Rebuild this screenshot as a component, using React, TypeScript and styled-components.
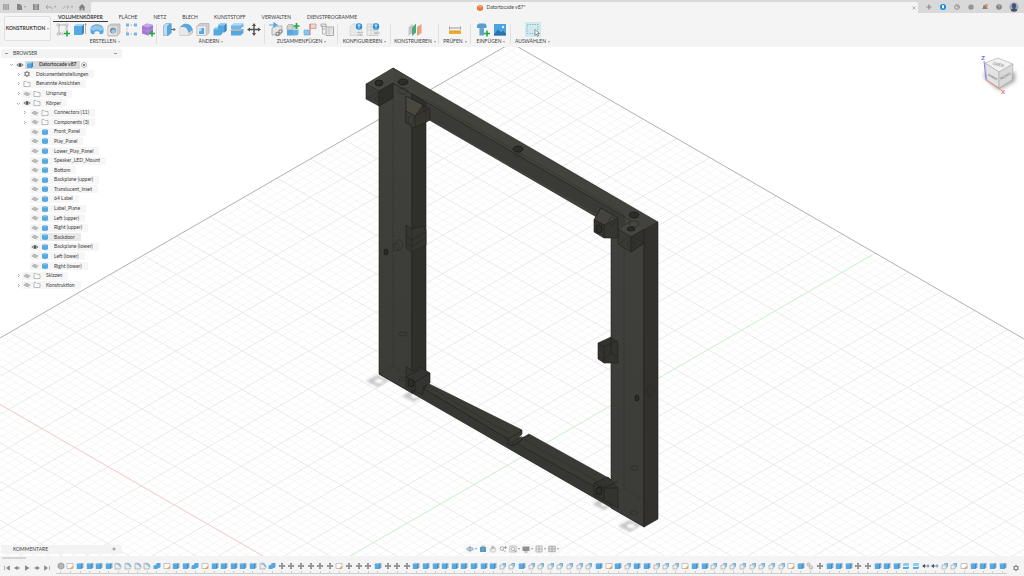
import React from "react";
import styled, { createGlobalStyle } from "styled-components";

const GlobalStyle = createGlobalStyle`
  *, *::before, *::after { box-sizing: border-box; }
  body { margin: 0; background: #fff; }
  button { font: inherit; color: inherit; background: none; border: 0; padding: 0; margin: 0; }
  ul, ol { list-style: none; margin: 0; padding: 0; }
  svg { display: block; }
`;

/* ---------- shell ---------- */

const Page = styled.div`
  display: flex;
  flex-direction: column;
  min-height: 100vh;
  background: #f4f4f4;
  color: #3c3c3c;
  font-family: Lato, "Noto Sans", sans-serif;
  font-size: 5px;
  line-height: 7px;
  overflow: hidden;
`;

const TitleBar = styled.header`
  display: flex;
  height: 13px;
  background: #d9d9d9;
  color: #777;
`;

const QuickAccess = styled.div`
  display: flex;
  align-items: center;
  justify-content: space-between;
  width: 91px;
  padding: 0 5px 0 2px;
`;

const IconButton = styled.button`
  display: flex;
  align-items: center;
  gap: 1px;
`;

const DocumentTab = styled.div`
  flex: 1;
  display: flex;
  align-items: center;
  margin-top: 2px;
  padding-right: 1px;
  background: #f4f4f4;
  border-radius: 2px 2px 0 0;
  color: #444;
`;

const DocumentTitle = styled.h1`
  flex: 1;
  display: flex;
  align-items: center;
  justify-content: center;
  gap: 2px;
  margin: 0;
  font-size: 5px;
  font-weight: 400;
`;

const AccountBar = styled.div`
  display: flex;
  align-items: center;
  justify-content: space-between;
  width: 106px;
  padding: 0 5px 0 7px;
`;

const Ribbon = styled.div`
  display: flex;
  height: 34px;
  background: #f4f4f4;
`;

const WorkspaceButton = styled.button`
  display: flex;
  align-items: center;
  justify-content: center;
  gap: 2px;
  width: 47px;
  height: 25px;
  margin: 3px 2px 0 4px;
  border: 1px solid #dfdfdf;
  border-radius: 2px;
  background: #f7f7f7;
  font-weight: 700;
`;

const RibbonBody = styled.div`
  flex: 1;
`;

const TabList = styled.nav`
  display: flex;
  gap: 6px;
  height: 9px;
`;

const RibbonTab = styled.button<{ $active?: boolean }>`
  padding: 0 5px;
  height: 9px;
  line-height: 7px;
  font-weight: ${(p) => (p.$active ? 700 : 400)};
  border-bottom: 1px solid ${(p) => (p.$active ? "#3c3c3c" : "transparent")};
`;

const GroupRow = styled.div`
  display: flex;
  height: 24px;
`;

const ToolGroup = styled.section<{ $width: number; $last?: boolean }>`
  position: relative;
  display: flex;
  flex-direction: column;
  align-items: center;
  width: ${(p) => p.$width}px;
  &::after {
    content: "";
    display: ${(p) => (p.$last ? "none" : "block")};
    position: absolute;
    right: 0;
    top: 2px;
    width: 1px;
    height: 20px;
    background: #e0e0e0;
  }
`;

const ToolIcons = styled.div`
  display: flex;
  gap: 3px;
  height: 15px;
`;

const ToolButton = styled.button<{ $selected?: boolean }>`
  padding: 0 ${(p) => (p.$selected ? 1 : 0)}px;
  height: 15px;
  background: ${(p) => (p.$selected ? "#d3e9f1" : "none")};
`;

const GroupLabel = styled.button`
  display: flex;
  align-items: center;
  gap: 2px;
  height: 9px;
  white-space: nowrap;
`;

const Caret = styled.span`
  width: 0;
  height: 0;
  border: 1px solid transparent;
  border-top: 2px solid #9b9b9b;
  border-bottom: 0;
`;

/* ---------- canvas ---------- */

const Viewport = styled.main`
  position: relative;
  flex: 1;
  display: grid;
  grid-template-rows: 1fr auto;
  background: #fff;
`;

const Scene = styled.svg`
  position: absolute;
  inset: 0;
  width: 100%;
  height: 100%;
`;

const Overlay = styled.div`
  position: relative;
  display: flex;
  justify-content: space-between;
  align-items: flex-start;
  padding: 2px 0 0 1px;
`;

const BottomOverlay = styled.div`
  position: relative;
  display: grid;
  grid-template-columns: 1fr auto 1fr;
  align-items: center;
  padding: 0 1px 2px;
`;

const PanelHeader = styled.div`
  display: flex;
  align-items: center;
  gap: 5px;
  width: 121px;
  height: 9px;
  padding: 0 5px 0 4px;
  background: #f3f3f3;
  color: #444;
`;

const PanelTitle = styled.h2<{ $inset?: boolean }>`
  flex: 1;
  margin: 0;
  padding-left: ${(p) => (p.$inset ? 8 : 0)}px;
  font-size: 5px;
  font-weight: 400;
`;

const Dash = styled.span`
  width: 3px;
  height: 1px;
  background: #999;
`;

const Tree = styled.ul`
  display: grid;
  grid-auto-rows: 1fr;
  height: 230px;
  margin-top: 2px;
`;

const TreeRow = styled.li<{ $depth: number }>`
  display: flex;
  align-items: center;
  gap: ${(p) => (p.$depth === 2 ? 2 : 0)}px;
  padding-left: ${(p) => [6, 13, 19][p.$depth]}px;
`;

const Chevron = styled.button`
  width: 8px;
  height: 7px;
  display: flex;
  align-items: center;
  justify-content: center;
`;

const RowPlate = styled.div`
  display: flex;
  align-items: center;
  height: 8px;
  background: #f6f6f6;
`;

const IconCell = styled.span`
  display: flex;
  justify-content: center;
  width: 10px;
`;

const RowLabel = styled.div<{ $tone: "plain" | "hover" | "root" }>`
  display: flex;
  align-items: center;
  height: 8px;
  padding-right: ${(p) => (p.$tone === "root" ? 3 : 6)}px;
  white-space: nowrap;
  background: ${(p) => ({ plain: "transparent", hover: "#e9e9e9", root: "#dadada" })[p.$tone]};
  font-weight: ${(p) => (p.$tone === "root" ? 700 : 400)};
  & > span:last-child { padding-left: 4px; }
`;

const CubeFrame = styled.div`
  width: 48px;
  height: 56px;
`;

const NavBar = styled.div`
  display: flex;
  align-items: center;
  gap: 2px;
  height: 10px;
  padding: 0 2px;
  background: #f8f8f8;
`;

/* ---------- timeline ---------- */

const TimelineBar = styled.footer`
  display: flex;
  height: 20px;
  background: #f4f4f4;
`;

const Playback = styled.div`
  width: 56px;
  padding: 1px 2px 0;
`;

const ScrollThumb = styled.div`
  width: 24px;
  height: 2px;
  background: #d5d5d5;
`;

const PlaybackButtons = styled.div`
  display: flex;
  justify-content: space-between;
  padding: 5px 3px 0 1px;
`;

const Track = styled.ol`
  flex: 1;
  display: flex;
  height: 18px;
  padding-top: 6px;
  border-bottom: 1px solid #cfcfcf;
`;

const Feature = styled.li`
  flex: 1 1 0;
  min-width: 0;
  display: flex;
  flex-direction: column;
  align-items: center;
  justify-content: space-between;
  &::after {
    content: "";
    width: 1px;
    height: 2px;
    background: #cfcfcf;
  }
`;

const TimelineSettings = styled.div`
  width: 17px;
  padding: 8px 0 0 5px;
`;

/* ---------- icons ---------- */

const BLUE = "#56a9e0";
const LIGHT = "#8fcaf0";
const DEEP = "#3f84b4";
const GREY = "#959595";

type Glyph = React.ReactNode;

const Plus = () => <path d="M11 8.5v6M8 11.5h6" stroke="#20a845" strokeWidth="1.6" />;

const toolGlyphs: Record<string, Glyph> = {
  Skizze: (
    <>
      <path d="M2 3h10M2 12h6M3 2v11M11 2v6" stroke={GREY} strokeWidth=".7" fill="none" />
      <path d="M4 11c4 0 6-3 6-7" stroke={GREY} strokeWidth=".6" strokeDasharray="1 1" fill="none" />
      <path d="M1 2h2v2H1zM10 2h2v2h-2zM1 11h2v2H1z" fill="#fff" stroke={GREY} strokeWidth=".5" />
      <Plus />
    </>
  ),
  Extrusion: (
    <>
      <path d="M1 4l2-2h8L9 4z" fill="#a8d5f2" />
      <path d="M1 4h8v9H1z" fill={BLUE} />
      <path d="M9 4l2-2v9l-2 2z" fill={DEEP} />
      <path d="M12.500 12V2M11.500 3l1-1.500 1 1.500" stroke="#888" strokeWidth=".6" fill="none" />
    </>
  ),
  Drehen: (
    <>
      <path d="M.500 7c0-3 3-4.500 6.500-4.500S13.500 4 13.500 7v3c0 1.500-1.500 2.500-4 2V10c-1-1-4-1-5 0v2c-2.500.500-4-.500-4-2z" fill={BLUE} />
      <path d="M.500 7c0-3 3-4.500 6.500-4.500S13.500 4 13.500 7c-1 1.500-3 2-4 1.500-1-1-4-1-5 0-1 .500-3 0-4-1.500z" fill={LIGHT} />
      <path d="M2 5c2-2.500 8-2.500 10 0" stroke="#888" strokeWidth=".6" fill="none" />
    </>
  ),
  Bohrung: (
    <>
      <path d="M1 4l3-2h9v9l-3 3H1z" fill="#cfcfcf" stroke="#a5a5a5" strokeWidth=".6" />
      <path d="M1 4h9v9.500H1zM10 4l3-2" fill="#e7e7e7" stroke="#b5b5b5" strokeWidth=".5" />
      <circle cx="6" cy="8.500" r="3" fill="#8a8a8a" />
      <circle cx="6.500" cy="9.300" r="2" fill={LIGHT} />
    </>
  ),
  Muster: (
    <>
      <path d="M3 3v9h8M3 3h8" stroke="#aaa" strokeWidth=".6" fill="none" strokeDasharray="2 1" />
      <path d="M2 1.500h3v3H2zM10 1.500h3v3h-3zM2 10.500h3v3H2zM10 10.500h3v3h-3z" fill="#74b7e4" />
    </>
  ),
  Form: (
    <>
      <path d="M1 4l5-2.500 6 1.500v7l-5 3.500-6-2z" fill="#a377d6" />
      <path d="M1 4l5-2.500L12 3 7 5.500z" fill="#c6a6ea" />
      <path d="M7 5.500v8M1 8l6 1.500L12 7" stroke="#bb9ae0" strokeWidth=".6" fill="none" />
      <Plus />
    </>
  ),
  Druecken: (
    <>
      <path d="M1.500 3.500L4 1.500h5v9.500l-3 2.500H1.500z" fill="#b9ddf4" stroke="#999" strokeWidth=".6" />
      <path d="M5 4l3-2.500h1.500V11l-3 2.500H5z" fill={BLUE} />
      <path d="M9 7.500h4M11.500 6L13 7.500 11.500 9" stroke="#555" strokeWidth=".9" fill="none" />
    </>
  ),
  Abrunden: (
    <>
      <path d="M1 5l4-3h3l5.500 5v4L10 13.500H1z" fill="#d7d7d7" stroke="#a5a5a5" strokeWidth=".6" />
      <path d="M5 2h3c3 0 5.500 3 5.500 6L9 11c0-4-2-6-5-6H1z" fill={BLUE} />
      <path d="M1 5h2c4 0 6.500 3 6.500 8.500H1z" fill="#e8e8e8" />
    </>
  ),
  Schale: (
    <>
      <path d="M1 4l3-2.500h9V11l-3 2.500H1z" fill="#cfcfcf" stroke="#a5a5a5" strokeWidth=".6" />
      <path d="M1 4h9v9.500H1z" fill="#eee" stroke="#b5b5b5" strokeWidth=".5" />
      <path d="M3 6h5v6H3z" fill="#b5daf2" />
      <path d="M3 12V9.500l2.500-.5V6H8v6z" fill={BLUE} />
    </>
  ),
  Kombinieren: (
    <>
      <path d="M5 3.500l2-2h6.500v7l-2 2H9.500v1l-2 2H.500v-6l2-2H5z" fill={BLUE} />
      <path d="M5 3.500l2-2h6.500l-2 2zM.500 7.500l2-2H5v2z" fill="#8cc8f0" />
      <path d="M11.500 3.500l2-2v7l-2 2z" fill={DEEP} />
    </>
  ),
  Teilen: (
    <>
      <path d="M1 3.500l3-2h9.500v3l-3 2.500H1z" fill="#6db9e9" />
      <path d="M1 3.500l3-2h9.500l-3 2z" fill="#b4dcf5" />
      <path d="M0 9l2-2h12l-3 2z" fill="#b5b5b5" />
      <path d="M1 9h9.500l3-2v4l-3 2.500H1z" fill={BLUE} />
    </>
  ),
  Verschieben: (
    <path
      d="M7 1L9 4H7.700v2.800H11V5.500l3 2-3 2V8.200H7.700V11H9l-2 3-2-3h1.300V8.200H3v1.300l-3-2 3-2v1.300h3.300V4H5z"
      fill="#505050"
    />
  ),
  Einfuegen: (
    <>
      <path d="M3 6l2-2h8v5l-2 4H3z" fill="#e5e5e5" stroke="#999" strokeWidth=".7" />
      <path d="M0 3h5M5 1l3 2-3 2z" stroke={BLUE} fill={BLUE} strokeWidth="1.200" />
      <circle cx="8.500" cy="12" r="1.700" fill="none" stroke="#666" strokeWidth=".9" />
      <circle cx="11.500" cy="9.500" r="1.700" fill="none" stroke="#666" strokeWidth=".9" />
    </>
  ),
  Komponente: (
    <>
      <path d="M1 4l1.500-1.500H7V7L5.500 8H1z" fill="#d0d0d0" stroke="#999" strokeWidth=".6" />
      <path d="M1 8h6v5.500H1z" fill={BLUE} />
      <path d="M7 8h4l1.500-1v5L11 13.500H7z" fill="#67b2e2" />
      <path d="M7 8V4l3-1 2 4z" fill="#b0cfe2" />
      <path d="M10.500 1v6M7.500 4h6" stroke="#20a845" strokeWidth="1.600" />
    </>
  ),
  Verbindung: (
    <>
      <path d="M7 2h6v4.500H7z" fill="#ddd" stroke="#db8378" strokeWidth=".7" />
      <path d="M1 8h5.500v5H1z" fill="#86c5ee" stroke={BLUE} strokeWidth=".6" />
      <path d="M7 13V2" stroke="#e46a5c" strokeWidth=".9" />
    </>
  ),
  Tabelle: (
    <>
      <path d="M1 2h5v2.500H1zM2.500 4.500V12M2.500 7H5M2.500 12H5" stroke="#888" strokeWidth=".6" fill="#e5e5e5" />
      <path d="M6 5h7.500v8.500H6z" fill="#f3f3f3" stroke="#888" strokeWidth=".7" />
      <path d="M6 7h7.500M6 9h7.500M6 11h7.500M9 5v8.500" stroke="#aaa" strokeWidth=".5" />
    </>
  ),
  Konfiguration: (
    <>
      <path d="M1 5l3-3h5l4 3v8.500H1z" fill="#e8e8e8" stroke="#d0d0d0" strokeWidth=".7" />
      <circle cx="10" cy="4.500" r="3.200" fill="#2b90dc" />
      <path d="M10 2.500v4M8.500 4L10 2.500 11.500 4" stroke="#fff" strokeWidth=".8" fill="none" />
      <path d="M8 10.500h6M8 13h6M10 9.500v2M12 12v2" stroke="#aaa" strokeWidth=".6" />
    </>
  ),
  Konfigurationstabelle: (
    <>
      <path d="M1 2h11v11.500H1z" fill="#ededed" stroke="#c0c0c0" strokeWidth=".7" />
      <path d="M1 5h11M1 8h11M5 2v11M8 5v8" stroke="#c5c5c5" strokeWidth=".6" />
      <circle cx="10" cy="4.500" r="3.200" fill="#2b90dc" />
      <path d="M10 2.500v4M8.500 4L10 2.500 11.500 4" stroke="#fff" strokeWidth=".8" fill="none" />
      <path d="M8 11h6M10 9.500v3" stroke="#aaa" strokeWidth=".7" />
    </>
  ),
  Ebene: (
    <>
      <path d="M.500 5.500l4-4v9l-4 3.500z" fill="#c5c5c5" />
      <path d="M4 5.500l4-4v9L4 14z" fill="#4aa97e" />
      <path d="M9 5l4.500-3v9L9 14z" fill="#e6a27c" />
    </>
  ),
  Messen: (
    <>
      <path d="M1.500 4.500v3M12.500 4.500v3M2 6h10" stroke="#777" strokeWidth=".7" />
      <path d="M1 8.500h12V12H1z" fill="#efaa34" />
      <path d="M3 8.500v2M5 8.500v1M7 8.500v2M9 8.500v1M11 8.500v2" stroke="#b07a25" strokeWidth=".4" />
    </>
  ),
  Schraube: (
    <>
      <path d="M1 3l2-1.500h6L10.500 3v3H1z" fill="#5a9fca" />
      <path d="M3.500 6H8v7.500H3.500z" fill="#70b0d6" />
      <path d="M3.500 8H8M3.500 10H8M3.500 12H8" stroke="#4a88ad" strokeWidth=".6" />
      <Plus />
    </>
  ),
  Bild: (
    <>
      <path d="M1 2h12v11.500H1z" fill="#4ba3e0" />
      <path d="M1 12.500l4-5 3 3 2-2 3 3.500v1.500H1z" fill="#2a73a8" />
      <circle cx="10" cy="5" r="1.200" fill="#e4f4ff" />
    </>
  ),
  Auswahl: (
    <>
      <path d="M1 2.500h11v9H1z" fill="none" stroke="#5dbb8a" strokeWidth=".7" strokeDasharray="1.500 1" />
      <path d="M9 7.500v6l1.500-1.500 1 2.300 1-.500-1-2.300h2z" fill="#fff" stroke="#555" strokeWidth=".6" />
    </>
  ),
};

const ToolIcon = ({ name }: { name: string }) => (
  <svg width="14" height="15" viewBox="0 0 14 15" aria-hidden="true">
    {toolGlyphs[name]}
  </svg>
);

const smallGlyphs: Record<string, Glyph> = {
  apps: <path d="M1 2h6M1 4h6M1 6h6" stroke="#8c8c8c" strokeWidth="1.300" strokeDasharray="1.600 .600" />,
  file: <path d="M2 1h3l2 2v4H2z" fill="#858585" />,
  save: (
    <>
      <path d="M1 1h6v6H1z" fill="#858585" />
      <path d="M2 2h4M2 5h4M4 1v6" stroke="#c5c5c5" strokeWidth=".8" />
    </>
  ),
  undo: <path d="M3 2L1 4l2 2M1 4h4c1 0 2 .500 2 2" stroke="#999" fill="none" strokeWidth=".8" />,
  redo: <path d="M5 2l2 2-2 2M7 4H3C2 4 1 4.500 1 6" stroke="#b0b0b0" fill="none" strokeWidth=".8" />,
  home: <path d="M4 1L.500 4.500h1V7.500h1.800V5.500h1.400v2h1.800v-3h1z" fill="#808080" />,
  close: <path d="M2 2l4 4M6 2L2 6" stroke="#888" strokeWidth=".8" />,
  plus: <path d="M4 1.500v5M1.500 4h5" stroke="#888" strokeWidth="1.200" />,
  plusThin: <path d="M5 2.500v3M3.500 4h3" stroke="#777" strokeWidth=".8" />,
  sync: (
    <>
      <circle cx="4" cy="4" r="3" fill="#118ce3" />
      <path d="M3 2.300h2v2.500l-1 1-1-1z" fill="#fff" />
    </>
  ),
  clock: (
    <>
      <circle cx="4" cy="4" r="2.300" fill="#e0e0e0" stroke="#8a8a8a" />
      <path d="M4 2.500V4h2.500" stroke="#8a8a8a" strokeWidth=".8" fill="none" />
    </>
  ),
  globe: (
    <>
      <circle cx="4" cy="4" r="2.600" fill="#8a8a8a" />
      <path d="M4 2v4M2 4h4" stroke="#aaa" strokeWidth=".6" />
    </>
  ),
  bell: (
    <>
      <path d="M1 6l1-1V3.500c0-2 4-2 4 0V5l1 1zM3 7h2" fill="#858585" />
      <circle cx="5.500" cy="2.300" r="1.500" fill="#ee8d66" />
    </>
  ),
  help: (
    <>
      <circle cx="4" cy="4" r="2.800" fill="#808080" />
      <path d="M3 3.300c0-1 2-1 2 0S4 4 4 4.700M4 5.500v.600" stroke="#ddd" strokeWidth=".6" fill="none" />
    </>
  ),
  eye: (
    <>
      <path d="M.800 4Q4 .800 7.200 4 4 7.200.800 4z" fill="none" stroke="#777" strokeWidth=".8" />
      <circle cx="4" cy="4" r="1.500" fill="#555" />
    </>
  ),
  eyeOff: (
    <>
      <path d="M.800 4Q4 1 7.200 4 4 7 .800 4z" fill="none" stroke="#9c9c9c" strokeWidth=".7" />
      <circle cx="4" cy="4" r="1.200" fill="none" stroke="#9c9c9c" strokeWidth=".6" />
      <path d="M2 1.500l4 5" stroke="#9c9c9c" strokeWidth=".5" />
    </>
  ),
  folder: <path d="M1 6.500v-5h2l1 1h3v4z" fill="#fafafa" stroke="#999" strokeWidth=".6" />,
  body: (
    <>
      <path d="M1 2Q4 .700 7 2v4.300q-3 1.300-6 0z" fill={BLUE} />
      <path d="M1 2Q4 .700 7 2 4 3.200 1 2z" fill="#93ccf2" />
    </>
  ),
  component: (
    <>
      <path d="M1 2.500L2.500 1H7v4.500L5.500 7H1z" fill={BLUE} />
      <path d="M1 2.500L2.500 1H7L5.500 2.500z" fill="#a4d5f4" />
      <path d="M5.500 2.500L7 1v4.500L5.500 7z" fill={DEEP} />
    </>
  ),
  gear: (
    <>
      <circle cx="4" cy="4" r="1.900" fill="none" stroke="#777" strokeWidth="1" />
      <path d="M4 1v1M4 6v1M1.400 2.500l.900.500M5.700 5l.900.500M1.400 5.500l.900-.500M5.700 3l.900-.500" stroke="#777" strokeWidth="1.100" />
    </>
  ),
  active: (
    <>
      <circle cx="4" cy="4" r="2.400" fill="#fff" stroke="#888" strokeWidth=".6" />
      <circle cx="4" cy="4" r="1" fill="#555" />
    </>
  ),
  orbit: (
    <>
      <path d="M4 .800v6.400M1 4h6" stroke="#888" strokeWidth=".7" />
      <ellipse cx="4" cy="4" rx="3.300" ry="1.700" fill="none" stroke="#6f9dbf" strokeWidth=".7" />
    </>
  ),
  look: (
    <>
      <path d="M1 2h6v5H1z" fill="#5a9ac6" />
      <path d="M2 1.200h4M2 4h4" stroke="#8a9aa5" strokeWidth=".8" />
    </>
  ),
  pan: <path d="M2 7L.800 4l1-.300.700 1V1.500h.800V4 1h.900v3-2.500h.900V4l.700-1.500.700.400L6 7z" fill="#eee" stroke="#aaa" strokeWidth=".5" />,
  zoom: (
    <>
      <circle cx="3" cy="3.500" r="1.800" fill="none" stroke="#8a8a8a" strokeWidth=".7" />
      <path d="M4.500 5l2 2M6.500 1v3M5 2.500h3" stroke="#8a8a8a" strokeWidth=".7" />
    </>
  ),
  fit: (
    <>
      <path d="M.800 1h6.400v6H.800z" fill="none" stroke="#a0a0a0" strokeWidth=".6" />
      <circle cx="4" cy="4" r="1.900" fill="#e6eef3" stroke="#999" strokeWidth=".6" />
      <path d="M5.300 5.300l1.700 1.700" stroke="#888" />
    </>
  ),
  display: <path d="M.500 1.500h7v4.500h-7zM2.500 6.500h3v1h-3z" fill="#909090" />,
  grid: <path d="M1 1h6v6H1zM1 4h6M4 1v6" fill="#eee" stroke="#909090" strokeWidth=".6" />,
  views: <path d="M.800 1.300h6.400v5.400H.800zM.800 4h6.400M4 1.300v5.400" fill="#e5e5e5" stroke="#999" strokeWidth=".8" />,
  first: <path d="M1.500 1.800v4.400M6.500 1.800v4.400L3.500 4z" fill="#888" stroke="#888" strokeWidth=".6" />,
  back: <path d="M1 4l3.500-2.300v4.600zM4.500 3.200h2v1.600h-2z" fill="#888" />,
  play: <path d="M2 1.300l4.500 2.700L2 6.700z" fill="#888" />,
  forward: <path d="M7 4L3.500 1.700v4.600zM1.500 3.200h2v1.600h-2z" fill="#888" />,
  last: <path d="M6.500 1.800v4.400M1.500 1.800v4.400L4.500 4z" fill="#888" stroke="#888" strokeWidth=".6" />,
  product: (
    <>
      <path d="M4 .800l3 1.500v3.500L4 7.300 1 5.800V2.300z" fill="#ec7a30" />
      <path d="M1 2.300L4 .800l3 1.500-3 1.400z" fill="#f6a26c" />
    </>
  ),
};

const SmallIcon = ({ name, size = 8 }: { name: string; size?: number }) => (
  <svg width={size} height={size} viewBox="0 0 8 8" aria-hidden="true">
    {smallGlyphs[name]}
  </svg>
);

/* ---------- scene drawing ---------- */

const SLOPE = 0.577;
const RISING_EDGE = 338;
const RISING_STEP = 38.2;
const FALLING_EDGE = -252;
const FALLING_STEP = 38.6;

type Pt = [number, number];

/** Point where a rising line (y + sx = a) meets a falling one (y - sx = b). */
const meet = (a: number, b: number): Pt => [(a - b) / (2 * SLOPE), (a + b) / 2];

const gridPath = (wantMajor: boolean) => {
  const parts: string[] = [];
  const seg = (p: Pt, q: Pt) =>
    parts.push(`M${p[0].toFixed(1)} ${p[1].toFixed(1)}L${q[0].toFixed(1)} ${q[1].toFixed(1)}`);
  for (let i = 0; i <= 125; i++) {
    if ((i % 5 === 0) !== wantMajor) continue;
    const a = RISING_EDGE + (i * RISING_STEP) / 5;
    const b = FALLING_EDGE + (i * FALLING_STEP) / 5;
    seg(meet(a, FALLING_EDGE), meet(a, 720));
    seg(meet(RISING_EDGE, b), meet(1300, b));
  }
  return parts.join("");
};

const Poly = ({ p, f, s = "#20201d" }: { p: string; f: string; s?: string }) => (
  <polygon points={p} fill={f} stroke={s} strokeWidth=".6" strokeLinejoin="round" />
);

const Hole = ({ x, y, rx = 4, ry = 3, dark }: { x: number; y: number; rx?: number; ry?: number; dark?: boolean }) => (
  <ellipse
    cx={x}
    cy={y}
    rx={rx}
    ry={ry}
    fill={dark ? "#2c2c29" : "none"}
    stroke={dark ? "#161614" : "#2a2a27"}
    strokeWidth=".7"
  />
);

const Shadow = ({ x, y }: { x: number; y: number }) => (
  <g filter="url(#soft)">
    <path d={`M${x - 12} ${y}l11-6 12 5-11 7z`} fill="#bbb" opacity=".8" />
    <ellipse cx={x + 1} cy={y} rx="4" ry="2" fill="#fff" />
  </g>
);

const ModelScene = () => (
  <Scene viewBox="0 47 1024 509" preserveAspectRatio="xMidYMid slice" role="img" aria-label="Backplane (lower)">
    <defs>
      <filter id="soft" x="-30%" y="-30%" width="160%" height="160%">
        <feGaussianBlur stdDeviation="1" />
      </filter>
      <linearGradient id="front" x1="0" y1="0" x2="0" y2="1">
        <stop offset="0" stopColor="#40403d" />
        <stop offset="1" stopColor="#3b3b38" />
      </linearGradient>
    </defs>
    <path d={gridPath(false)} stroke="#f4f4f4" strokeWidth=".8" fill="none" />
    <path d={gridPath(true)} stroke="#e4e4e4" strokeWidth=".8" fill="none" />
    <path d="M0 338L511.300 43 1024 339" stroke="#b0b0b0" strokeWidth=".9" fill="none" />
    <path d="M0 404.500L263 556" stroke="#f9c4c4" strokeWidth=".8" />
    <path d="M350 556L872 255" stroke="#c6f5c6" strokeWidth=".8" />

    <Shadow x={378} y={381} />
    <Shadow x={414} y={396} />
    <Shadow x={604} y={504} />
    <Shadow x={630} y={526} />

    {/* top rail */}
    <Poly p="393,68 658,222 631,237 393,99" f="#43433d" />
    <Poly p="393,83 625,217 625,230 393,99" f="#3a3a36" s="none" />
    <path d="M393 83L625 217" stroke="#20201d" strokeWidth=".6" />
    <path d="M425 99L520 153 624 214" stroke="#2f2f2b" strokeWidth=".5" fill="none" />

    {/* bottom rail */}
    <Poly p="379,374 393,366 522,430 522,434 518,438 524,437 529,434 612,480 645,527" f="#3b3b36" />
    <Poly p="424,388 508,439 514,443 595,487 645,516 645,527 400,386" f="#363632" s="none" />
    <path d="M424 384L508 433M524 440L604 485" stroke="#2b2b27" strokeWidth=".5" />
    <path d="M424 389L508 439V444L513 446 522 440M513 446V442L522 436M508 439L522 431M516 443L529 435M516 443L595 487" stroke="#1b1b18" strokeWidth=".6" fill="none" />

    {/* left post */}
    <Poly p="379,91 393,83 412,94 412,393 379,374" f="url(#front)" />
    <Poly p="412,94 426,102 426,388 412,393" f="#302f2b" />
    <path d="M393 84V366M393 366L379 374M393 366L412 377" stroke="#2d2d2a" strokeWidth=".5" strokeDasharray="4 1" fill="none" />

    {/* upper left corner block */}
    <Poly p="366,84 393,68 406,76 393,83 379,91" f="#464640" />
    <Poly p="366,84 379,91 379,106 366,99" f="#3b3b37" />
    <Poly p="379,91 393,83 393,98 379,106" f="#2e2d29" />
    <path d="M366 99L380 91 393 98" stroke="#262623" strokeWidth=".4" fill="none" />
    <path d="M393 68L412 79 412 94 393 83z" fill="#44443e" />
    <path d="M393 83L412 94" stroke="#20201d" strokeWidth=".6" />
    <Hole x={379} y={83} dark />
    <Hole x={379} y={99} rx={4} ry={2} />
    <Hole x={403} y={82} rx={5} dark />
    <Hole x={403} y={91} rx={5} />
    <Hole x={518} y={149} rx={5} dark />
    <Hole x={518} y={155} rx={4} ry={2} />

    {/* brackets on the left post */}
    <Poly p="406,96 423,105 430,110 430,120 415,128 406,123" f="#35342f" />
    <Poly p="406,96 423,105 415,116 406,111" f="#484740" />
    <Poly p="406,111 415,116 415,128 406,123" f="#3d3d38" />
    <path d="M415 116L430 108M423 105L426 115" stroke="#20201d" strokeWidth=".6" />
    <Hole x={411} y={120} rx={3} ry={4} />
    <Poly p="406,225 412,229 423,226 426,230 426,245 412,252 406,248" f="#343430" />
    <path d="M412 229V252M406 236L412 240 426 232M406 242L412 246 426 238" stroke="#20201d" strokeWidth=".5" fill="none" />
    <Poly p="406,366 412,371 420,367 430,373 430,383 423,387 423,395 406,387" f="#343430" />
    <path d="M406 377L415 382V391M415 382L430 373M406 377L420 369" stroke="#1b1b18" strokeWidth=".6" fill="none" />
    <Hole x={411} y={383} rx={3} ry={4} dark />
    <Hole x={386} y={252} rx={2} ry={3} dark />
    <Hole x={396} y={247} rx={3} ry={4} />
    <Hole x={399} y={245} rx={4} ry={5} />
    <Hole x={403} y={334} rx={4} ry={2} />
    <Hole x={403} y={379} rx={4} ry={2} />

    {/* right post */}
    <Poly p="611,232 631,252 644,243 644,527 611,508" f="url(#front)" />
    <Poly p="631,237 658,222 658,519 644,527 644,243 631,252" f="#32312c" />
    <path d="M624 242V488M611 496L624 488 644 500" stroke="#2a2a27" strokeWidth=".5" strokeDasharray="4 1" fill="none" />
    <path d="M644 500L658 519" stroke="#2a2a27" strokeWidth=".4" />
    <Poly p="618,229 631,221 644,229 631,237" f="#464640" s="none" />
    <Poly p="618,229 631,237 631,252 618,244" f="#3a3a35" />
    <Poly p="631,237 644,229 644,243 631,252" f="#32312d" />
    <path d="M618 244L631 236 644 243M625 217L631 221 618 229" stroke="#262623" strokeWidth=".5" fill="none" />
    <Hole x={634} y={215} rx={5} dark />
    <Hole x={634} y={224} rx={5} />
    <Hole x={631} y={229} rx={4} ry={2} dark />
    <Hole x={631} y={244} />

    {/* brackets on the right post */}
    <Poly p="601,208 618,218 618,238 604,238 594,232 594,220" f="#353530" />
    <Poly p="594,220 601,208 618,218 604,225" f="#44433d" />
    <path d="M604 225V238M594 220L604 225" stroke="#1b1b18" strokeWidth=".6" />
    <Hole x={599} y={229} rx={3} ry={4} dark />
    <Hole x={612} y={221} rx={3} ry={4} />
    <Poly p="598,343 611,337 618,343 618,363 604,363 598,359" f="#33322e" />
    <path d="M598 343L604 347V363M604 347L618 340M604 359L611 353 618 357M611 337V353" stroke="#1b1b18" strokeWidth=".5" fill="none" />
    <Poly p="608,477 618,488 618,508 594,495 594,483" f="#33332f" />
    <path d="M594 483L604 488 618 481M604 488V500M604 488H618" stroke="#1b1b18" strokeWidth=".6" fill="none" />
    <Hole x={599} y={491} rx={3} ry={4} dark />
    <Hole x={637} y={398} rx={2} ry={3} dark />
    <Hole x={648} y={392} rx={3} ry={4} />
    <Hole x={651} y={391} rx={4} ry={5} />
    <Hole x={634} y={468} rx={4} ry={2} />
    <Hole x={634} y={513} rx={4} ry={2} />
  </Scene>
);

const ViewCube = () => (
  <CubeFrame>
    <svg width="48" height="56" viewBox="976 49 48 56" role="img" aria-label="ViewCube" fontWeight="700" textAnchor="middle">
      <defs>
        <filter id="cubeShadow" x="-40%" y="-40%" width="180%" height="180%">
          <feGaussianBlur stdDeviation="2" />
        </filter>
      </defs>
      <path d="M985 78l14 12 16-9v-9h-30z" fill="#777" opacity=".7" filter="url(#cubeShadow)" />
      <path d="M985 63l13-5 15 6-14 8z" fill="#f1f1f1" stroke="#aaa" strokeWidth=".6" />
      <path d="M985 63l14 9v16l-12-8z" fill="#e3e3e3" stroke="#aaa" strokeWidth=".6" />
      <path d="M999 72l14-8-1 16-13 8z" fill="#d9d9d9" stroke="#aaa" strokeWidth=".6" />
      <text transform="translate(998 66) rotate(12)" fontSize="4" fill="#999">OBEN</text>
      <text transform="translate(992 78) rotate(32)" fontSize="3" fill="#777">VORNE</text>
      <text transform="translate(1006 77) rotate(-29)" fontSize="3" fill="#777">RECHTS</text>
      <path d="M984 61l2 19" stroke="#7b7bea" strokeWidth=".9" />
      <path d="M986 80l15 10" stroke="#e58181" strokeWidth=".9" />
      <text x="983" y="60" fontSize="6" fill="#6a6af0">Z</text>
      <text x="1003" y="94" fontSize="6" fill="#f26a6a">X</text>
    </svg>
  </CubeFrame>
);

/* ---------- timeline features ---------- */

const SEQUENCE =
  "cseeeeffffbseebseeeeefbmmmmmmsmmmemmmeeeeeeeeehhehhhhhhhesehee" +
  "hhhseehhhhhhhhselmeeemmeeeppaahhseeee";

const featureGlyphs: Record<string, Glyph> = {
  c: <path d="M4 .800l3 1.500v3.400L4 7.200 1 5.700V2.300z" fill="#b5b5b5" stroke="#8a8a8a" strokeWidth=".6" />,
  s: (
    <>
      <path d="M1 1.500h6v5H1z" fill="#fff" stroke="#a0a0a0" strokeWidth=".6" />
      <path d="M4.500 7l2.500-2.500" stroke="#f0a244" strokeWidth="1.400" />
    </>
  ),
  e: (
    <>
      <path d="M.800 2.300L2 1h4.500v5L5.300 7H.800z" fill={BLUE} />
      <path d="M.800 2.300L2 1h4.500L5.300 2.300z" fill="#8cc4ea" />
      <path d="M5.300 2.300L6.500 1v5L5.300 7z" fill={DEEP} />
      <path d="M7.300 1v5" stroke="#999" strokeWidth=".5" />
    </>
  ),
  f: (
    <>
      <path d="M1 1.300h3.500c1.500.500 2.500 2 2.500 4L6 7H1z" fill="#ededed" stroke="#999" strokeWidth=".6" />
      <path d="M2.500 1.300h2c1.500.500 2.500 2 2.500 3.700H5.500C5.500 3.500 4.500 2.500 2.500 2.500z" fill="#7fb9df" />
    </>
  ),
  b: <path d="M3 2l1-1h3.500v4l-1 1H5l-.500 1H.500V4l1-1H3z" fill={BLUE} />,
  m: <path d="M4 1v6M1 4h6M3.200 1.800h1.600M3.200 6.200h1.600M1.800 3.200v1.600M6.200 3.200v1.600" stroke="#666" strokeWidth=".9" />,
  h: (
    <>
      <path d="M1 3h4v4H1z" fill="#f0f0f0" stroke="#b0b0b0" strokeWidth=".8" />
      <path d="M2.500 2.500L4 1h3v3.500L5.500 6V2.500z" fill="#74b0d8" />
    </>
  ),
  l: (
    <>
      <circle cx="2.500" cy="2.500" r="1.500" fill="#ddd" stroke="#999" strokeWidth=".6" />
      <circle cx="5" cy="5.500" r="1.700" fill="#ddd" stroke="#999" strokeWidth=".6" />
    </>
  ),
  p: (
    <>
      <path d="M1 2l1-1h5v2L6 4H1z" fill={LIGHT} />
      <path d="M1 5h5l1-1v2L6 7H1z" fill={BLUE} />
    </>
  ),
  a: (
    <>
      <path d="M.500 4h4M2.500 2.500v3L.800 4z" fill="#444" stroke="#444" strokeWidth=".7" />
      <circle cx="6" cy="4" r="1.400" fill="#79a5cf" />
    </>
  ),
};

/* ---------- data ---------- */

const TABS = ["VOLUMENKÖRPER", "FLÄCHE", "NETZ", "BLECH", "KUNSTSTOFF", "VERWALTEN", "DIENSTPROGRAMME"];

const GROUPS: { label: string; width: number; tools: string[] }[] = [
  { label: "ERSTELLEN", width: 104, tools: ["Skizze", "Extrusion", "Drehen", "Bohrung", "Muster", "Form"] },
  { label: "ÄNDERN", width: 108, tools: ["Druecken", "Abrunden", "Schale", "Kombinieren", "Teilen", "Verschieben"] },
  { label: "ZUSAMMENFÜGEN", width: 73, tools: ["Einfuegen", "Komponente", "Verbindung", "Tabelle"] },
  { label: "KONFIGURIEREN", width: 53, tools: ["Konfiguration", "Konfigurationstabelle"] },
  { label: "KONSTRUIEREN", width: 48, tools: ["Ebene"] },
  { label: "PRÜFEN", width: 32, tools: ["Messen"] },
  { label: "EINFÜGEN", width: 40, tools: ["Schraube", "Bild"] },
  { label: "AUSWÄHLEN", width: 43, tools: ["Auswahl"] },
];

type Node = {
  label: string;
  depth: number;
  icon: string;
  eye?: "eye" | "eyeOff";
  arrow?: "open" | "closed";
  tone?: "hover" | "root";
};

const body = (label: string, extra: Partial<Node> = {}): Node => ({
  label,
  depth: 2,
  icon: "body",
  eye: "eyeOff",
  ...extra,
});

const NODES: Node[] = [
  { label: "Datortocade v87", depth: 0, icon: "component", eye: "eye", arrow: "open", tone: "root" },
  { label: "Dokumenteinstellungen", depth: 1, icon: "gear", arrow: "closed" },
  { label: "Benannte Ansichten", depth: 1, icon: "folder", arrow: "closed" },
  { label: "Ursprung", depth: 1, icon: "folder", eye: "eyeOff", arrow: "closed" },
  { label: "Körper", depth: 1, icon: "folder", eye: "eye", arrow: "open" },
  { label: "Connectors (11)", depth: 2, icon: "folder", eye: "eyeOff", arrow: "closed" },
  { label: "Components (3)", depth: 2, icon: "folder", eye: "eyeOff", arrow: "closed" },
  body("Front_Panel"),
  body("Play_Panel"),
  body("Lower_Play_Panel"),
  body("Speaker_LED_Mount"),
  body("Bottom"),
  body("Backplane (upper)"),
  body("Translucent_inset"),
  body("64 Label"),
  body("Label_Plane"),
  body("Left (upper)"),
  body("Right (upper)"),
  body("Backdoor", { tone: "hover" }),
  body("Backplane (lower)", { eye: "eye" }),
  body("Left (lower)"),
  body("Right (lower)"),
  { label: "Skizzen", depth: 1, icon: "folder", eye: "eyeOff", arrow: "closed" },
  { label: "Konstruktion", depth: 1, icon: "folder", eye: "eyeOff", arrow: "closed" },
];

const NAV: { icon: string; label: string; menu?: boolean }[] = [
  { icon: "orbit", label: "Orbit", menu: true },
  { icon: "look", label: "Ansicht" },
  { icon: "pan", label: "Pan" },
  { icon: "zoom", label: "Zoom" },
  { icon: "fit", label: "Einpassen", menu: true },
  { icon: "display", label: "Anzeige", menu: true },
  { icon: "grid", label: "Raster", menu: true },
  { icon: "views", label: "Ansichtsfenster", menu: true },
];

const IconSpacer = styled.span`
  width: 8px;
`;

const TreeItem = ({ node }: { node: Node }) => (
  <TreeRow $depth={node.depth}>
    {node.arrow ? (
      <Chevron aria-label={node.label}>
        <svg width="5" height="5" viewBox="0 0 5 5" aria-hidden="true">
          <path
            d={node.arrow === "open" ? "M1 2l1.500 1.500L4 2" : "M2 1l1.500 1.500L2 4"}
            fill="none"
            stroke="#888"
            strokeWidth=".7"
          />
        </svg>
      </Chevron>
    ) : (
      <IconSpacer />
    )}
    <RowPlate>
      {node.eye && (
        <IconCell>
          <SmallIcon name={node.eye} />
        </IconCell>
      )}
      <RowLabel $tone={node.tone ?? "plain"}>
        <IconCell>
          <SmallIcon name={node.icon} />
        </IconCell>
        <span>{node.label}</span>
      </RowLabel>
      {node.tone === "root" && <SmallIcon name="active" />}
    </RowPlate>
  </TreeRow>
);

const Avatar = () => (
  <svg width="10" height="10" viewBox="0 0 10 10" role="img" aria-label="Profil">
    <circle cx="5" cy="5" r="4.500" fill="#9aa9be" />
    <path d="M3 3.500c0-3 4-3 4 0v1.500L6 6.500l2 1V9q-3 1.500-6 0V7.500l2-1L3 5z" fill="#46526a" />
  </svg>
);

export default function App() {
  return (
    <Page>
      <GlobalStyle />
      <TitleBar>
        <QuickAccess>
          <IconButton aria-label="Daten"><SmallIcon name="apps" /></IconButton>
          <IconButton aria-label="Datei"><SmallIcon name="file" /><Caret /></IconButton>
          <IconButton aria-label="Speichern"><SmallIcon name="save" /></IconButton>
          <IconButton aria-label="Rückgängig"><SmallIcon name="undo" /><Caret /></IconButton>
          <IconButton aria-label="Wiederholen"><SmallIcon name="redo" /><Caret /></IconButton>
          <IconButton aria-label="Startseite"><SmallIcon name="home" /></IconButton>
        </QuickAccess>
        <DocumentTab>
          <DocumentTitle><SmallIcon name="product" />Datortocade v87*</DocumentTitle>
          <IconButton aria-label="Schließen"><SmallIcon name="close" size={6} /></IconButton>
        </DocumentTab>
        <AccountBar>
          <IconButton aria-label="Neu"><SmallIcon name="plus" /></IconButton>
          <IconButton aria-label="Synchronisieren"><SmallIcon name="sync" /></IconButton>
          <IconButton aria-label="Aufträge"><SmallIcon name="clock" /></IconButton>
          <IconButton aria-label="Online"><SmallIcon name="globe" /></IconButton>
          <IconButton aria-label="Mitteilungen"><SmallIcon name="bell" /></IconButton>
          <IconButton aria-label="Hilfe"><SmallIcon name="help" /></IconButton>
          <Avatar />
        </AccountBar>
      </TitleBar>

      <Ribbon>
        <WorkspaceButton>KONSTRUKTION<Caret /></WorkspaceButton>
        <RibbonBody>
          <TabList>
            {TABS.map((t, i) => (
              <RibbonTab key={t} $active={i === 0}>{t}</RibbonTab>
            ))}
          </TabList>
          <GroupRow>
            {GROUPS.map((g, i) => (
              <ToolGroup key={g.label} $width={g.width} $last={i === GROUPS.length - 1}>
                <ToolIcons>
                  {g.tools.map((t) => (
                    <ToolButton key={t} aria-label={t} $selected={t === "Auswahl"}>
                      <ToolIcon name={t} />
                    </ToolButton>
                  ))}
                </ToolIcons>
                <GroupLabel>{g.label}<Caret /></GroupLabel>
              </ToolGroup>
            ))}
          </GroupRow>
        </RibbonBody>
      </Ribbon>

      <Viewport>
        <ModelScene />
        <Overlay>
          <aside>
            <PanelHeader>
              <Dash />
              <PanelTitle>BROWSER</PanelTitle>
              <Dash />
            </PanelHeader>
            <Tree>
              {NODES.map((n) => (
                <TreeItem key={n.label} node={n} />
              ))}
            </Tree>
          </aside>
          <ViewCube />
        </Overlay>
        <BottomOverlay>
          <PanelHeader>
            <PanelTitle $inset>KOMMENTARE</PanelTitle>
            <SmallIcon name="plusThin" />
          </PanelHeader>
          <NavBar>
            {NAV.map((n) => (
              <IconButton key={n.icon} aria-label={n.label}>
                <SmallIcon name={n.icon} />
                {n.menu && <Caret />}
              </IconButton>
            ))}
          </NavBar>
        </BottomOverlay>
      </Viewport>

      <TimelineBar>
        <Playback>
          <ScrollThumb />
          <PlaybackButtons>
            {["first", "back", "play", "forward", "last"].map((n) => (
              <IconButton key={n} aria-label={n}><SmallIcon name={n} /></IconButton>
            ))}
          </PlaybackButtons>
        </Playback>
        <Track>
          {SEQUENCE.split("").map((k, i) => (
            <Feature key={i}>
              <svg width="8" height="8" viewBox="0 0 8 8" aria-hidden="true">{featureGlyphs[k]}</svg>
            </Feature>
          ))}
        </Track>
        <TimelineSettings>
          <IconButton aria-label="Einstellungen"><SmallIcon name="gear" /></IconButton>
        </TimelineSettings>
      </TimelineBar>
    </Page>
  );
}
